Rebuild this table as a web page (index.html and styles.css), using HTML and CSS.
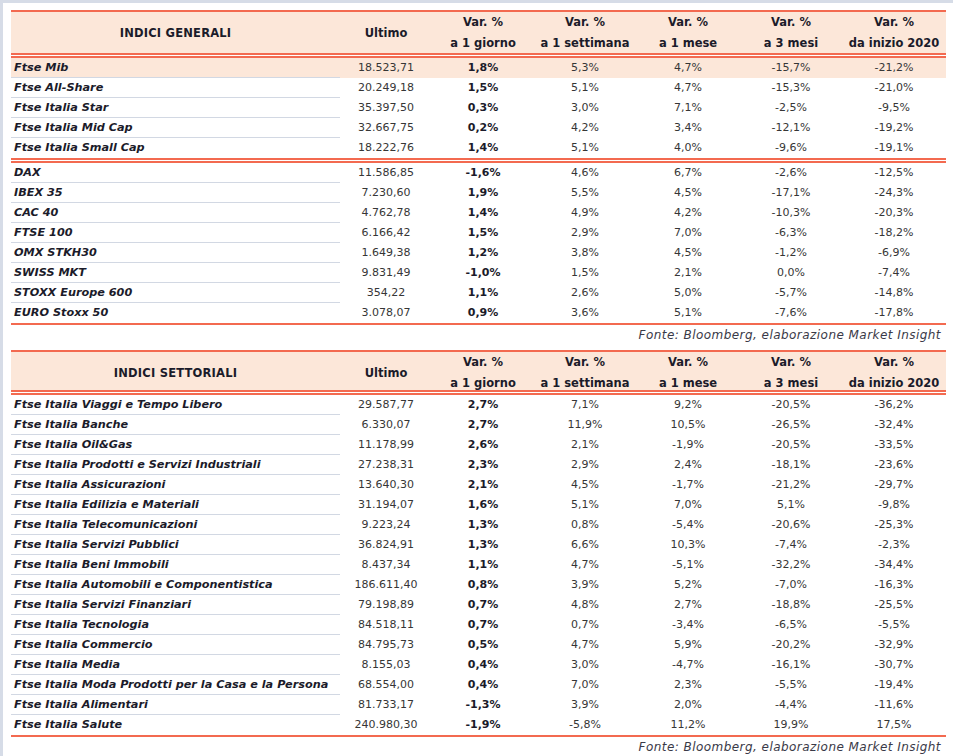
FILE: index.html
```html
<!DOCTYPE html>
<html lang="it">
<head>
<meta charset="utf-8">
<title>Indici</title>
<link rel="stylesheet" href="styles.css">
</head>
<body>
<div class="page">
  <section class="tbl">
    <div class="head">
      <div class="hname">INDICI GENERALI</div>
      <div class="hcell">Ultimo</div>
      <div class="hcell"><span>Var. %</span><span>a 1 giorno</span></div>
      <div class="hcell"><span>Var. %</span><span>a 1 settimana</span></div>
      <div class="hcell"><span>Var. %</span><span>a 1 mese</span></div>
      <div class="hcell"><span>Var. %</span><span>a 3 mesi</span></div>
      <div class="hcell"><span>Var. %</span><span>da inizio 2020</span></div>
    </div>
    <div class="dbl"></div>
    <div class="row hl"><div class="name">Ftse Mib</div><div>18.523,71</div><div class="b">1,8%</div><div>5,3%</div><div>4,7%</div><div>-15,7%</div><div>-21,2%</div></div>
    <div class="row"><div class="name">Ftse All-Share</div><div>20.249,18</div><div class="b">1,5%</div><div>5,1%</div><div>4,7%</div><div>-15,3%</div><div>-21,0%</div></div>
    <div class="row"><div class="name">Ftse Italia Star</div><div>35.397,50</div><div class="b">0,3%</div><div>3,0%</div><div>7,1%</div><div>-2,5%</div><div>-9,5%</div></div>
    <div class="row"><div class="name">Ftse Italia Mid Cap</div><div>32.667,75</div><div class="b">0,2%</div><div>4,2%</div><div>3,4%</div><div>-12,1%</div><div>-19,2%</div></div>
    <div class="row last"><div class="name">Ftse Italia Small Cap</div><div>18.222,76</div><div class="b">1,4%</div><div>5,1%</div><div>4,0%</div><div>-9,6%</div><div>-19,1%</div></div>
    <div class="dbl"></div>
    <div class="row"><div class="name">DAX</div><div>11.586,85</div><div class="b">-1,6%</div><div>4,6%</div><div>6,7%</div><div>-2,6%</div><div>-12,5%</div></div>
    <div class="row"><div class="name">IBEX 35</div><div>7.230,60</div><div class="b">1,9%</div><div>5,5%</div><div>4,5%</div><div>-17,1%</div><div>-24,3%</div></div>
    <div class="row"><div class="name">CAC 40</div><div>4.762,78</div><div class="b">1,4%</div><div>4,9%</div><div>4,2%</div><div>-10,3%</div><div>-20,3%</div></div>
    <div class="row"><div class="name">FTSE 100</div><div>6.166,42</div><div class="b">1,5%</div><div>2,9%</div><div>7,0%</div><div>-6,3%</div><div>-18,2%</div></div>
    <div class="row"><div class="name">OMX STKH30</div><div>1.649,38</div><div class="b">1,2%</div><div>3,8%</div><div>4,5%</div><div>-1,2%</div><div>-6,9%</div></div>
    <div class="row"><div class="name">SWISS MKT</div><div>9.831,49</div><div class="b">-1,0%</div><div>1,5%</div><div>2,1%</div><div>0,0%</div><div>-7,4%</div></div>
    <div class="row"><div class="name">STOXX Europe 600</div><div>354,22</div><div class="b">1,1%</div><div>2,6%</div><div>5,0%</div><div>-5,7%</div><div>-14,8%</div></div>
    <div class="row last"><div class="name">EURO Stoxx 50</div><div>3.078,07</div><div class="b">0,9%</div><div>3,6%</div><div>5,1%</div><div>-7,6%</div><div>-17,8%</div></div>
    <div class="end"></div>
    <p class="src">Fonte: Bloomberg, elaborazione Market Insight</p>
  </section>

  <section class="tbl second">
    <div class="head">
      <div class="hname">INDICI SETTORIALI</div>
      <div class="hcell">Ultimo</div>
      <div class="hcell"><span>Var. %</span><span>a 1 giorno</span></div>
      <div class="hcell"><span>Var. %</span><span>a 1 settimana</span></div>
      <div class="hcell"><span>Var. %</span><span>a 1 mese</span></div>
      <div class="hcell"><span>Var. %</span><span>a 3 mesi</span></div>
      <div class="hcell"><span>Var. %</span><span>da inizio 2020</span></div>
    </div>
    <div class="dbl"></div>
    <div class="row"><div class="name">Ftse Italia Viaggi e Tempo Libero</div><div>29.587,77</div><div class="b">2,7%</div><div>7,1%</div><div>9,2%</div><div>-20,5%</div><div>-36,2%</div></div>
    <div class="row"><div class="name">Ftse Italia Banche</div><div>6.330,07</div><div class="b">2,7%</div><div>11,9%</div><div>10,5%</div><div>-26,5%</div><div>-32,4%</div></div>
    <div class="row"><div class="name">Ftse Italia Oil&amp;Gas</div><div>11.178,99</div><div class="b">2,6%</div><div>2,1%</div><div>-1,9%</div><div>-20,5%</div><div>-33,5%</div></div>
    <div class="row"><div class="name">Ftse Italia Prodotti e Servizi Industriali</div><div>27.238,31</div><div class="b">2,3%</div><div>2,9%</div><div>2,4%</div><div>-18,1%</div><div>-23,6%</div></div>
    <div class="row"><div class="name">Ftse Italia Assicurazioni</div><div>13.640,30</div><div class="b">2,1%</div><div>4,5%</div><div>-1,7%</div><div>-21,2%</div><div>-29,7%</div></div>
    <div class="row"><div class="name">Ftse Italia Edilizia e Materiali</div><div>31.194,07</div><div class="b">1,6%</div><div>5,1%</div><div>7,0%</div><div>5,1%</div><div>-9,8%</div></div>
    <div class="row"><div class="name">Ftse Italia Telecomunicazioni</div><div>9.223,24</div><div class="b">1,3%</div><div>0,8%</div><div>-5,4%</div><div>-20,6%</div><div>-25,3%</div></div>
    <div class="row"><div class="name">Ftse Italia Servizi Pubblici</div><div>36.824,91</div><div class="b">1,3%</div><div>6,6%</div><div>10,3%</div><div>-7,4%</div><div>-2,3%</div></div>
    <div class="row"><div class="name">Ftse Italia Beni Immobili</div><div>8.437,34</div><div class="b">1,1%</div><div>4,7%</div><div>-5,1%</div><div>-32,2%</div><div>-34,4%</div></div>
    <div class="row"><div class="name">Ftse Italia Automobili e Componentistica</div><div>186.611,40</div><div class="b">0,8%</div><div>3,9%</div><div>5,2%</div><div>-7,0%</div><div>-16,3%</div></div>
    <div class="row"><div class="name">Ftse Italia Servizi Finanziari</div><div>79.198,89</div><div class="b">0,7%</div><div>4,8%</div><div>2,7%</div><div>-18,8%</div><div>-25,5%</div></div>
    <div class="row"><div class="name">Ftse Italia Tecnologia</div><div>84.518,11</div><div class="b">0,7%</div><div>0,7%</div><div>-3,4%</div><div>-6,5%</div><div>-5,5%</div></div>
    <div class="row"><div class="name">Ftse Italia Commercio</div><div>84.795,73</div><div class="b">0,5%</div><div>4,7%</div><div>5,9%</div><div>-20,2%</div><div>-32,9%</div></div>
    <div class="row"><div class="name">Ftse Italia Media</div><div>8.155,03</div><div class="b">0,4%</div><div>3,0%</div><div>-4,7%</div><div>-16,1%</div><div>-30,7%</div></div>
    <div class="row"><div class="name">Ftse Italia Moda Prodotti per la Casa e la Persona</div><div>68.554,00</div><div class="b">0,4%</div><div>7,0%</div><div>2,3%</div><div>-5,5%</div><div>-19,4%</div></div>
    <div class="row"><div class="name">Ftse Italia Alimentari</div><div>81.733,17</div><div class="b">-1,3%</div><div>3,9%</div><div>2,0%</div><div>-4,4%</div><div>-11,6%</div></div>
    <div class="row last"><div class="name">Ftse Italia Salute</div><div>240.980,30</div><div class="b">-1,9%</div><div>-5,8%</div><div>11,2%</div><div>19,9%</div><div>17,5%</div></div>
    <div class="end"></div>
    <p class="src">Fonte: Bloomberg, elaborazione Market Insight</p>
  </section>
</div>
</body>
</html>
```

FILE: styles.css
```css
html, body {
  margin: 0;
  padding: 0;
}
body {
  background: #d6dce7;
  font-family: "DejaVu Sans", "Liberation Sans", sans-serif;
  color: #1b1b2a;
}
.page {
  margin: 3px 0 0 3px;
  background: #ffffff;
  height: 753px;
  padding: 7px 4px 0 8px;
  box-sizing: border-box;
  overflow: hidden;
}
.tbl {
  --cols: 329px 92px 102px 102px 104px 102px 104px;
  width: 935px;
}
.second {
  margin-top: 5px;
}
.head {
  display: grid;
  grid-template-columns: var(--cols);
  height: 41px;
  border-top: 2px solid #f36a50;
  background: #fce7d9;
  font-weight: bold;
  font-size: 11.5px;
  color: #1b1b2a;
}
.second .head {
  height: 38px;
}
.hname {
  display: flex;
  align-items: center;
  justify-content: center;
  letter-spacing: 0.2px;
}
.hcell {
  display: flex;
  flex-direction: column;
  align-items: center;
  justify-content: center;
  line-height: 21px;
  white-space: nowrap;
}
.dbl {
  height: 5px;
  box-sizing: border-box;
  border-top: 2px solid #f36a50;
  border-bottom: 2px solid #f36a50;
  background: #ffffff;
}
.row {
  display: grid;
  grid-template-columns: var(--cols);
  height: 20px;
  line-height: 20px;
  font-size: 11px;
  color: #363636;
  text-align: center;
  white-space: nowrap;
}
.row.hl {
  background: #fce7d9;
}
.row .name {
  text-align: left;
  padding-left: 3px;
  font-weight: bold;
  font-style: italic;
  font-size: 11.25px;
  color: #1b1b2a;
  box-sizing: border-box;
  border-bottom: 1px solid #d2d8e3;
  line-height: 19px;
}
.row.last .name {
  border-bottom: none;
  line-height: 20px;
}
.row .b {
  font-weight: bold;
  color: #1b1b2a;
}
.end {
  height: 2px;
  background: #f36a50;
}
.src {
  margin: 0;
  height: 20px;
  line-height: 20px;
  text-align: right;
  padding-right: 5px;
  font-style: italic;
  font-size: 12px;
  letter-spacing: 0.45px;
  color: #3a3a48;
}
```
